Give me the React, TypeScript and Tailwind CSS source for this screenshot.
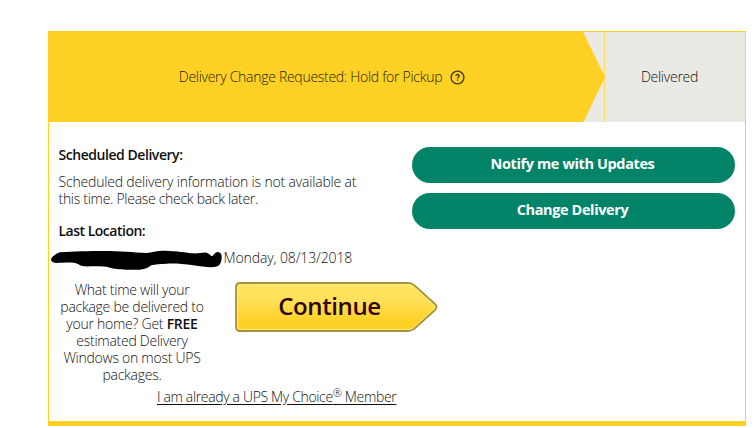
import React from 'react';

interface ActionButtonProps {
  label: string;
}

const ActionButton: React.FC<ActionButtonProps> = ({ label }) => {
  return (
    <button
      type="button"
      className="flex h-9 w-[323px] items-center justify-center whitespace-nowrap rounded-full bg-[#038468] pb-[3px] pr-[2px] text-[14.5px] font-bold tracking-[-0.38px] text-white"
    >
      {label}
    </button>
  );
};

const HelpIcon: React.FC = () => {
  return (
    <svg className="ml-2 h-[15px] w-[15px]" viewBox="0 0 15 15" fill="none" stroke="#3f381c">
      <circle cx="7.5" cy="7.5" r="6.4" strokeWidth="1.4" />
      <path d="M5.9 6.1c0-1 .7-1.6 1.6-1.6s1.7.5 1.7 1.4c0 1.2-1.6 1.2-1.6 2.5" strokeWidth="1.3" />
      <path d="M7.6 9.4v1.4" strokeWidth="1.3" />
    </svg>
  );
};

const StatusBar: React.FC = () => {
  return (
    <div className="flex h-[90px] bg-[#e9eae4]">
      <div className="flex w-[534px] items-center justify-center bg-[#ffd124]">
        <span className="ml-[12px] whitespace-nowrap pb-[2px] tracking-[-0.29px] text-[#221e0c]">
          Delivery Change Requested: Hold for Pickup
        </span>
        <HelpIcon />
      </div>
      <div className="flex w-[22px] border-r border-[#ffdb61]">
        <svg className="h-[90px] w-[22px] shrink-0" viewBox="0 0 22 90">
          <path d="M0 0L22 45L0.5 90H0Z" fill="#ffd124" />
        </svg>
      </div>
      <div className="flex flex-1 items-center justify-center pb-[2px] pr-[11px]">
        <span className="tracking-[-0.25px]">Delivered</span>
      </div>
    </div>
  );
};

const ContinueButton: React.FC = () => {
  return (
    <button type="button" className="grid h-[50px] w-[203px]">
      <svg className="col-start-1 row-start-1 h-[50px] w-[203px]" viewBox="0 0 203 50">
        <defs>
          <linearGradient id="continueFill" x1="0" y1="0" x2="0" y2="1">
            <stop offset="0" stopColor="#ffe563" />
            <stop offset="0.35" stopColor="#ffe05a" />
            <stop offset="0.8" stopColor="#ffd127" />
            <stop offset="1" stopColor="#ffd124" />
          </linearGradient>
        </defs>
        <path
          d="M5 1H173Q176 1 179 3L200 22Q203 25 200 28L179 47Q176 49 173 49H5Q1 49 1 45V5Q1 1 5 1Z"
          fill="url(#continueFill)"
          stroke="#a5923f"
          strokeWidth="1.8"
        />
        <path
          d="M5.5 2.5H173Q176 2.5 178 4L199 23Q201 25 199 27L178 46Q176 47.5 173 47.5H5.5Q2.5 47.5 2.5 44.5V5.5Q2.5 2.5 5.5 2.5Z"
          fill="none"
          stroke="#ffe978"
        />
      </svg>
      <span className="col-start-1 row-start-1 pr-[14px] pt-[7px] text-center text-[24px] font-semibold leading-[34px] tracking-[-0.4px] text-[#2d0505]">
        Continue
      </span>
    </button>
  );
};

const RedactedLocation: React.FC = () => {
  return (
    <svg className="mt-[3px] h-[20px] w-[171px]" viewBox="33 30 513 60">
      <path
        d="M33 58C35 50 45 43 60 37C100 34 150 33 190 33C240 33 280 37 320 39C335 37 350 32 375 32C410 33 440 38 460 40C475 41 490 36 500 38C508 40 511 47 516 49C521 46 524 37 532 36C540 36 545 40 545 50C545 62 543 73 532 79C515 85 490 80 460 76C430 71 400 70 380 71C360 72 345 72 334 76C325 83 318 87 300 89C270 90 230 89 210 83C190 77 150 80 130 79C118 76 112 69 100 68C80 67 65 69 48 69C38 68 33 65 33 58Z"
        fill="#000"
      />
    </svg>
  );
};

const DeliveryDetails: React.FC = () => {
  return (
    <div className="w-[363px] pl-[9.5px] pt-[24px] leading-[17px]">
      <p className="font-semibold tracking-[-0.45px]">Scheduled Delivery:</p>
      <p className="mt-[10px] whitespace-nowrap">
        <span className="tracking-[-0.18px]">Scheduled delivery information is not available at</span>
        <br />
        <span className="tracking-[-0.29px]">this time. Please check back later.</span>
      </p>
      <p className="mt-[15px] font-semibold tracking-[-0.5px]">Last Location:</p>
      <div className="-ml-[7.5px] mt-[8px] flex h-[20px]">
        <RedactedLocation />
        <span className="ml-[1.5px] whitespace-nowrap leading-[22px] tracking-[-0.12px]">Monday, 08/13/2018</span>
      </div>
    </div>
  );
};

const MyChoicePromo: React.FC = () => {
  return (
    <div className="pt-[15px]">
      <div className="flex h-[103px]">
        <p className="-mt-px w-[166px] whitespace-nowrap text-center leading-[17px] tracking-[-0.26px]">
          What time will your
          <br />
          package be delivered to
          <br />
          your home? Get <b className="font-semibold">FREE</b>
          <br />
          estimated Delivery
          <br />
          Windows on most UPS
          <br />
          packages.
        </p>
        <div className="ml-5">
          <ContinueButton />
        </div>
      </div>
      <a
        href="#"
        className="ml-[108px] mt-[3px] block w-[240px] whitespace-nowrap leading-[18px] tracking-[-0.35px] underline underline-offset-2"
      >
        I am already a UPS My Choice<sup className="text-[11px]">®</sup> Member
      </a>
    </div>
  );
};

export default function App() {
  return (
    <div className="min-h-[428px] bg-white pl-12 pt-[31px] font-['Open_Sans',sans-serif] text-[14px] font-light text-[#111]">
      <div className="h-[395px] w-[698px] border border-b-[5px] border-[#ffd124] bg-white">
        <StatusBar />
        <div className="flex">
          <DeliveryDetails />
          <div className="flex flex-col gap-2.5 pt-[25px]">
            <ActionButton label="Notify me with Updates" />
            <ActionButton label="Change Delivery" />
          </div>
        </div>
        <MyChoicePromo />
      </div>
    </div>
  );
}
